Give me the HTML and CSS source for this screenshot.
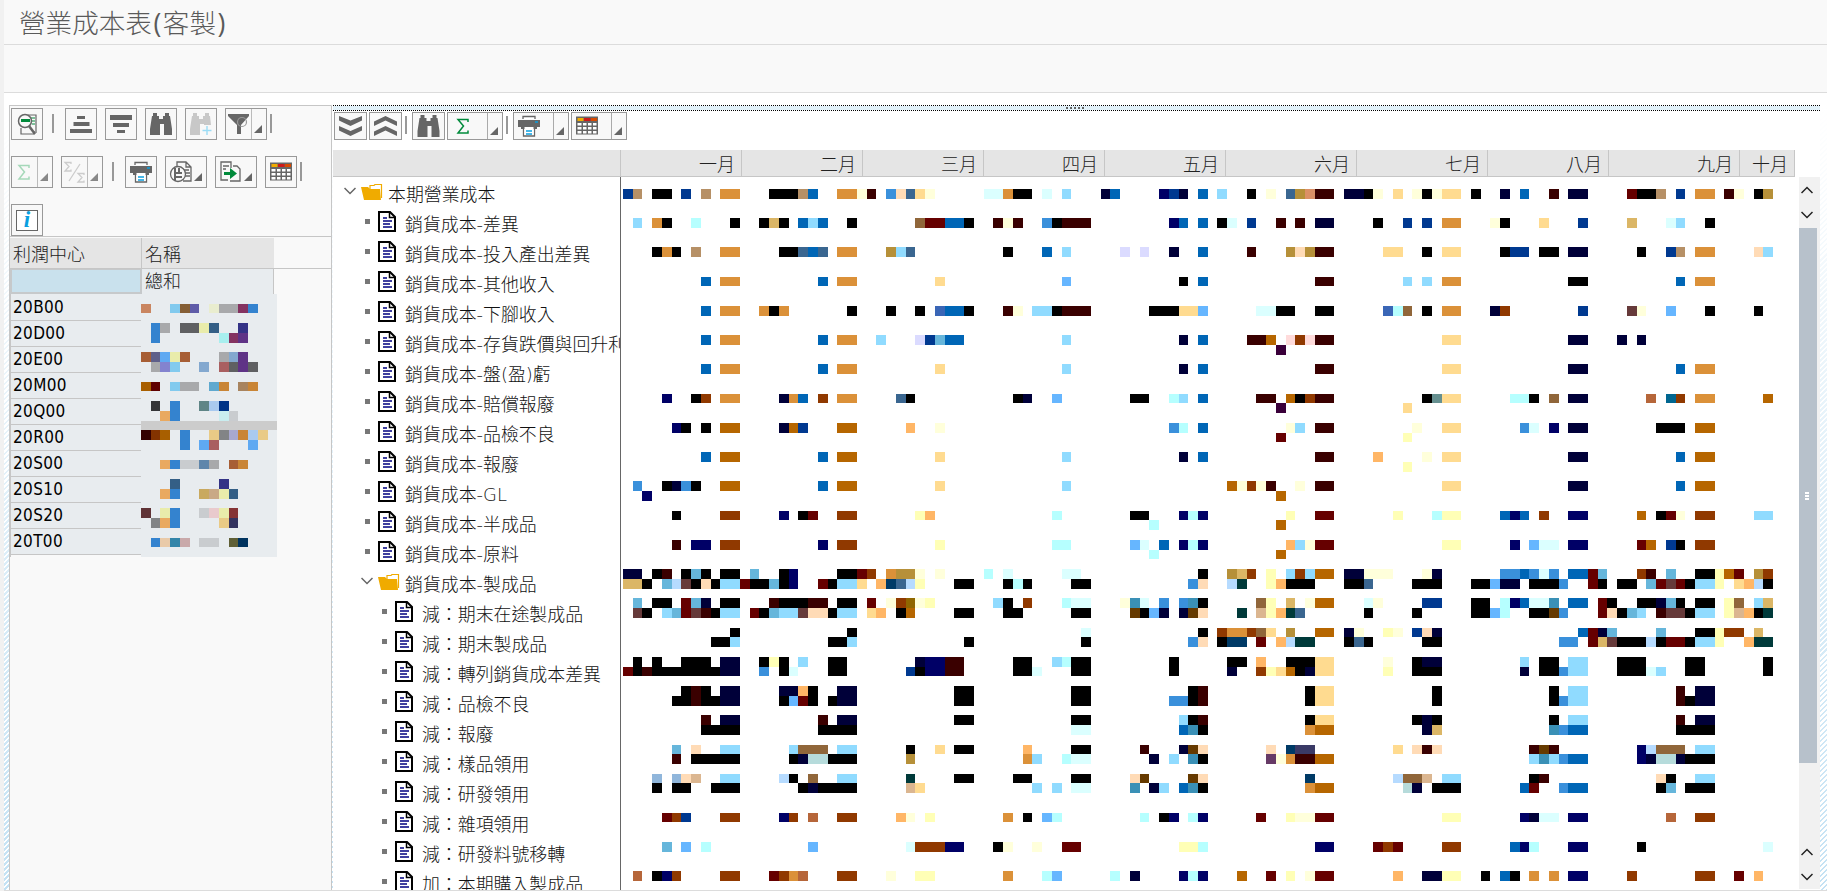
FILE: index.html
```html
<!DOCTYPE html>
<html lang="zh-Hant">
<head>
<meta charset="utf-8">
<title>營業成本表(客製)</title>
<link rel="stylesheet" href="styles.css">
</head>
<body>
<svg class="defs" width="0" height="0">
  <symbol id="detail" viewBox="0 0 32 32"><path d="M10 20v6h13v-3M17 7h8v18" fill="none" stroke="#666" stroke-width="1.2"/><path d="M20 10h4M21 13h3M21 16h3" stroke="#008a3b"/><circle cx="14" cy="13" r="6.500" fill="#f8f8f8" stroke="#666" stroke-width="1.5"/><path d="M10 12.500h9" stroke="#008a3b" stroke-width="3"/><path d="M18 18l6 8" stroke="#666" stroke-width="2.5"/></symbol>
  <symbol id="asc" viewBox="0 0 32 32"><path d="M12 8h8v3h-8zM8.500 14h16v4h-16zM5 21h22v4H5z" fill="#666"/></symbol>
  <symbol id="desc" viewBox="0 0 32 32"><path d="M5 7h22v5H5zM8 15h16v4H8zM12 22h8v3h-8z" fill="#666"/></symbol>
  <symbol id="find" viewBox="0 0 32 32"><path d="M8 5h4v3h2v3h4V8h2V5h4v3h1l2 13v6h-8V16h-4v11H5v-6L7 8h1z" fill="currentColor"/></symbol>
  <symbol id="findnext" viewBox="0 0 32 32"><path d="M8 5h4v3h2v3h4V8h2V5h4v3h1l1 9h-7v-1h-4v11H5v-6L7 8h1z" fill="#c8c8c8"/><path d="M22 18v9M17.500 22.500h9" stroke="#9bdcf5" stroke-width="1.400"/></symbol>
  <symbol id="filter" viewBox="0 0 26 32"><path d="M3 6h21v2l-8 9v9h-4v-9L3 8z" fill="#666"/><circle cx="17" cy="14" r="4.500" fill="none" stroke="#999" stroke-width="1.200"/></symbol>
  <symbol id="sum" viewBox="0 0 26 32"><path d="M18 12V9.500H8l5.500 6.500L8 23h10v-2.500" fill="none" stroke="currentColor" stroke-width="1.500"/></symbol>
  <symbol id="subsum" viewBox="0 0 26 32"><path d="M10 8V6.500H4l4 4-4 4.500h6v-1.500M23 19v-1.500h-6l4 4-4 4.500h6v-1.500M19 8L8 25" fill="none" stroke="#ccc" stroke-width="1.300"/></symbol>
  <symbol id="print" viewBox="0 0 32 32"><path d="M10 9V6.500h12V9M10.500 18v8h11v-8" fill="#fff" stroke="#666" stroke-width="1.300"/><path d="M5 10h22v7h-3v2H8v-2H5z" fill="#666"/><path d="M11.500 17h9v8h-9z" fill="#fff"/><path d="M13 21h6M13 24h6M22 12h3" stroke="#0a9fe0" stroke-width="1.300"/></symbol>
  <symbol id="views" viewBox="0 0 32 32"><path d="M12 10V6h9l5 5v14h-8M21 6v5h5M17 14h7M19 17h6M19 20h6" fill="none" stroke="#666" stroke-width="1.300"/><circle cx="13" cy="18" r="7.500" fill="#f8f8f8" stroke="#666" stroke-width="1.300"/><path d="M10 12v13M14 12v5M10 17h7M11 21h6" stroke="#666" stroke-width="2"/></symbol>
  <symbol id="export" viewBox="0 0 32 32"><path d="M13 24H6V6h10v6M8 10h6M8 13h3M15 25h10V13l-3-3h-4" fill="none" stroke="#666" stroke-width="1.300"/><path d="M9 16h6v-4l7 5.500-7 5.500v-4H9z" fill="#008a3b"/></symbol>
  <symbol id="layout" viewBox="0 0 32 32"><path d="M5 6.500h22v18H5z" fill="#666"/><path d="M6.500 8h6v3h-6z" fill="#f0ab00"/><path d="M13 8h6.500v3H13z" fill="#cc1919"/><path d="M20 8h6v3h-6z" fill="#d84a00"/><path d="M6.500 13h4v2.500h-4zM12 13h3.500v2.500H12zM17 13h3.500v2.500H17zM22 13h3.500v2.500H22zM6.500 17h4v2.500h-4zM12 17h3.500v2.500H12zM17 17h3.500v2.500H17zM22 17h3.500v2.500H22zM6.500 21h4v2.500h-4zM12 21h3.500v2.500H12zM17 21h3.500v2.500H17zM22 21h3.500v2.500H22z" fill="#fff"/></symbol>
  <symbol id="downs" viewBox="0 0 33 28"><path d="M5 4l11.500 4.500L28 4v4.500L16.500 14 5 8.500zM5 14l11.500 5L28 14v4.500L16.500 24 5 18.500z" fill="#666"/></symbol>
  <symbol id="ups" viewBox="0 0 33 28"><path d="M5 14l11.500-5.500L28 14V9.500L16.500 4 5 9.500zM5 24l11.500-5.500L28 24v-4.500L16.500 14 5 19.500z" fill="#666"/></symbol>
  <symbol id="corner" viewBox="0 0 8 8"><path d="M8 0v8H0z" fill="currentColor"/></symbol>
  <symbol id="folder" viewBox="0 0 22 17"><path d="M9 5V1.500h4l1-1h6.500V14" fill="none" stroke="#f0ab00" stroke-width="1.200"/><path d="M0 3h7l2 2h10l1 11H3z" fill="#f0ab00"/></symbol>
  <symbol id="doc" viewBox="0 0 18 21"><path d="M1 1h11l5 5v14H1z" fill="#fff" stroke="#000" stroke-width="2"/><path d="M11.500 1v5.500H17" fill="none" stroke="#000" stroke-width="1.500"/><path d="M5 7h4M5 10h9M5 13h7M5 16h9" stroke="#000080" stroke-width="1.600"/></symbol>
  <symbol id="chev" viewBox="0 0 12 8"><path d="M.500 1L6 6.500 11.500 1" fill="none" stroke="currentColor" stroke-width="1.500"/></symbol>
</svg>
<div class="edge"></div>
<div class="app">
  <header class="title">營業成本表<span class="paren">(</span>客製<span class="paren">)</span></header>
  <div class="bar"></div>
  <main class="work">
    <section class="left">
      <div class="tools">
        <div class="line">
          <span class="btn"><svg><use href="#detail"/></svg></span><i class="sep s1"></i>
          <span class="btn"><svg><use href="#asc"/></svg></span>
          <span class="btn"><svg><use href="#desc"/></svg></span>
          <span class="btn"><svg><use href="#find"/></svg></span>
          <span class="btn"><svg><use href="#findnext"/></svg></span>
          <span class="btn wide split"><svg><use href="#filter"/></svg><svg class="corner"><use href="#corner"/></svg></span><i class="sep s2"></i>
        </div>
        <div class="line">
          <span class="btn wide split off"><svg class="palegreen"><use href="#sum"/></svg><svg class="corner"><use href="#corner"/></svg></span>
          <span class="btn wide split off"><svg><use href="#subsum"/></svg><svg class="corner"><use href="#corner"/></svg></span><i class="sep s3"></i>
          <span class="btn"><svg><use href="#print"/></svg></span>
          <span class="btn wide"><svg><use href="#views"/></svg><svg class="corner"><use href="#corner"/></svg></span>
          <span class="btn wide"><svg><use href="#export"/></svg><svg class="corner"><use href="#corner"/></svg></span>
          <span class="btn"><svg><use href="#layout"/></svg></span><i class="sep s2"></i>
        </div>
        <div class="line"><span class="btn"><b class="info">i</b></span></div>
      </div>
      <div class="lhead"><span>利潤中心</span><span>名稱</span></div>
      <div class="total"><span></span><span>總和</span></div>
      <div class="lbody">
        <div class="codes"><span>20B00</span><span>20D00</span><span>20E00</span><span>20M00</span><span>20Q00</span><span>20R00</span><span>20S00</span><span>20S10</span><span>20S20</span><span>20T00</span></div>
        <svg class="names" id="names" viewBox="141 294 136 263"></svg>
      </div>
    </section>
    <section class="right">
      <div class="splitter"><i></i><i></i><i></i><i></i><i></i></div>
      <div class="rtools">
        <span class="btn"><svg><use href="#downs"/></svg></span>
        <span class="btn"><svg><use href="#ups"/></svg></span><i class="sep"></i>
        <span class="btn"><svg><use href="#find"/></svg></span>
        <span class="btn drop"><svg class="green"><use href="#sum"/></svg><svg class="corner"><use href="#corner"/></svg></span><i class="sep far"></i>
        <span class="btn drop"><svg><use href="#print"/></svg><svg class="corner"><use href="#corner"/></svg></span>
        <span class="btn drop"><svg><use href="#layout"/></svg><svg class="corner"><use href="#corner"/></svg></span>
      </div>
      <div class="months"><span></span><span>一月</span><span>二月</span><span>三月</span><span>四月</span><span>五月</span><span>六月</span><span>七月</span><span>八月</span><span>九月</span><span>十月</span></div>
      <div class="rbody">
        <div class="tree" id="tree"></div>
        <svg class="values" id="values" viewBox="621 177 1178 713"></svg>
        <div class="scroll">
          <svg class="arr up"><use href="#chev"/></svg>
          <svg class="arr"><use href="#chev"/></svg>
          <div class="thumb"><i></i><i></i><i></i></div>
          <svg class="arr up low"><use href="#chev"/></svg>
          <svg class="arr"><use href="#chev"/></svg>
        </div>
      </div>
    </section>
    <div class="hatch"></div>
  </main>
</div>
<script src="grid.js"></script>
</body>
</html>
```
FILE: styles.css
```css
* { box-sizing: border-box; }
body { margin: 0; width: 1827px; height: 891px; display: flex; overflow: hidden; background: #fff; color: #333; font-family: "DejaVu Sans", "Noto Sans CJK TC", sans-serif; }
.defs { position: absolute; }
.edge { width: 4px; background: #f1f1f1; }
.app { flex: 1; display: flex; flex-direction: column; border-bottom: 1px solid #dcdcdc; }
.title { height: 45px; padding-left: 15px; background: #f9f9f9; border-bottom: 1px solid #dcdcdc; font-family: "Open Sans", "Noto Sans CJK TC", sans-serif; font-weight: 300; font-size: 26.6px; line-height: 46px; color: #5a5a5a; }
.paren { font-weight: 400; padding: 0 1.5px; }
.bar { height: 48px; background: #f9f9f9; border-bottom: 1px solid #dcdcdc; }
.work { flex: 1; min-height: 0; display: flex; padding: 12px 0 0 5px; background: linear-gradient(#fff 12px, rgba(255,255,255,0)), repeating-linear-gradient(135deg, #c4e2f4 0 1.77px, #fff 1.77px 3.54px); }

.left { width: 323px; margin-right: 1px; border: 1px solid #c6c6c6; border-bottom: 0; background: #f9f9f9; }
.tools { height: 131px; padding: 2px 1px 0; border-bottom: 1px solid #c6c6c6; display: flex; flex-direction: column; gap: 16px; }
.line { display: flex; gap: 8px; height: 32px; }
.btn { position: relative; display: flex; width: 32px; height: 32px; border: 1px solid #999; background: #f8f8f8; color: #666; flex: none; }
.btn svg { width: 32px; height: 32px; margin: -1px; flex: none; }
.btn.wide { width: 42px; }
.split svg:first-child { width: 26px; margin-right: 0; }
.split::after { content: ""; position: absolute; left: 25px; top: 0; width: 1px; height: 30px; background: #bbb; }
.btn svg.corner { position: absolute; right: 4px; bottom: 6px; width: 8px; height: 8px; margin: 0; }
.off .corner { color: #888; }
.palegreen { color: #a5d8b9; }
.green { color: #008a3b; }
.info { margin: 5px 4px; width: 22px; height: 21px; border: 1px solid #666; font: italic bold 23px/18px "Liberation Serif", serif; text-align: center; color: #0a9fe0; background: #fff; }
.sep { width: 2px; height: 19px; margin-top: 6px; background: #999; flex: none; }
.s1 { margin-left: 1px; margin-right: 3px; }
.s2 { margin-left: -5px; }
.s3 { margin-left: 1px; margin-right: 3px; }

.lhead { display: flex; height: 32px; padding-top: 1px; border-bottom: 1px solid #c6c6c6; font-weight: 300; font-size: 18px; line-height: 34px; color: #222; }
.lhead span { width: 132px; height: 30px; background: #e5e5e5; padding-left: 3px; border-right: 1px solid #c6c6c6; }
.lhead span + span { width: 132px; border: 0; }
.total { display: flex; height: 25px; font-weight: 300; font-size: 18px; line-height: 26px; color: #222; }
.total span { width: 132px; background: #c9e1ed; border: 2px solid #c6c9cb; border-top-width: 1px; }
.total span + span { width: 132px; padding-left: 3px; background: #e8ecef; border: 0; border-right: 1px solid #c6c6c6; }
.lbody { display: flex; }
.codes { width: 131px; border-left: 1px solid #c6c6c6; color: #000; font-family: "DejaVu Sans Condensed", "DejaVu Sans", sans-serif; font-stretch: condensed; font-size: 17px; letter-spacing: .35px; }
.codes span { display: block; height: 26px; padding-left: 2px; line-height: 25px; background: #e8ecef; border-bottom: 1px solid #c6c6c6; }
.codes span:first-child { height: 27px; line-height: 27px; }
.names { width: 136px; height: 263px; background: #e8ecef; }

.right { width: 1487px; display: flex; flex-direction: column; background: #fff; }
.splitter { height: 6px; display: flex; gap: 2px; justify-content: center; padding: 2px 4px 0 0; flex: none; background: repeating-linear-gradient(90deg, #000 0 1px, #fff 1px 2px) 0 0 / 100% 1px no-repeat, repeating-linear-gradient(90deg, #000 0 1px, #fff 1px 2px) 0 100% / 100% 1px no-repeat, #e2f1f9; }
.splitter i { width: 2px; height: 2px; background: #666; }
.rtools { display: flex; gap: 2px; padding: 1px 0 0 1px; height: 39px; }
.rtools .btn { width: 33px; height: 28px; }
.rtools .btn svg { width: 33px; height: 32px; margin: -3px -1px; }
.rtools .btn.drop { width: 56px; }
.rtools .drop svg:first-child { width: 32px; }
.drop::after { content: ""; position: absolute; left: 39px; top: 0; width: 1px; height: 26px; background: #aaa; }
.rtools .btn svg.corner { width: 8px; height: 8px; bottom: 4px; margin: 0; }
.rtools .sep { margin: 4px 3px 0 1px; height: 18px; }
.months { display: flex; height: 27px; width: 1462px; background: #e5e5e5; border-bottom: 1px solid #c6c6c6; font-weight: 300; font-size: 18px; line-height: 29px; color: #222; }
.months span { width: 121px; height: 26px; border-right: 1px solid #c6c6c6; text-align: right; padding-right: 6px; }
.months span:nth-child(1) { width: 288px; }
.months span:nth-child(7), .months span:nth-child(8), .months span:nth-child(10) { width: 131px; }
.months span:nth-child(11) { width: 55px; }
.rbody { display: flex; flex: 1; min-height: 0; overflow: hidden; }
.tree { width: 288px; padding-top: 2px; border-right: 1px solid #666; overflow: hidden; }
.node { display: flex; align-items: center; height: 30px; padding-left: 11px; white-space: nowrap; font-weight: 300; font-size: 17.9px; line-height: 31px; color: #111; }
.l1 { padding-left: 28px; }
.l2 { padding-left: 45px; }
.node .chev { width: 12px; height: 8px; margin-right: 5px; color: #666; flex: none; margin-top: -6px; }
.node .folder { width: 22px; height: 17px; margin: -3px 5px 0 0; flex: none; }
.node .dot { width: 5px; height: 5px; margin: -5px 8px 0 4px; background: #777; flex: none; }
.node .doc { width: 18px; height: 21px; margin: -5px 9px 0 0; flex: none; }
.values { width: 1178px; height: 713px; flex: none; }
.scroll { width: 21px; height: 712px; background: #f1f1f1; display: flex; flex-direction: column; flex: none; }
.arr { width: 12px; height: 8px; color: #222; flex: none; }
.arr.up { transform: rotate(180deg); }
.scroll .arr { margin-left: 2px; }
.scroll .arr:nth-child(1) { margin-top: 9px; }
.scroll .arr:nth-child(2) { margin-top: 17px; }
.scroll .arr:nth-child(4) { margin-top: 85px; }
.scroll .arr:nth-child(5) { margin-top: 17px; }
.thumb { width: 18px; height: 535px; margin-top: 9px; padding: 264px 2px 0 0; background: #b7c1cb; display: flex; flex-direction: column; gap: 1px; align-items: center; flex: none; }
.thumb i { width: 4px; height: 2px; background: #fff; }
```
FILE: grid.js
```javascript
var PITCH = 9.7457;

// Draws one mosaic: each row is a list of "column[-lastColumn]colourKey" tokens.
function mosaic(id, x0, y0, palette, rows) {
  var out = '';
  Object.keys(rows).forEach(function (r) {
    var top = Math.round(y0 + PITCH * r), bottom = Math.round(y0 + PITCH * (+r + 1));
    rows[r].split(' ').forEach(function (t) {
      var m = /^(\d+)(?:-(\d+))?(\w)$/.exec(t);
      var a = Math.round(x0 + PITCH * m[1]), b = Math.round(x0 + PITCH * (+(m[2] || m[1]) + 1));
      out += '<rect x="' + a + '" y="' + top + '" width="' + (b - a) + '" height="' + (bottom - top) + '" fill="' + palette[m[3]] + '"/>';
    });
  });
  document.getElementById(id).innerHTML = out;
}

mosaic('names', 141, 303.65, {
  a: '#a8a9ab', b: '#3483cf', c: '#82caee', d: '#5f6062', e: '#e9ecab', f: '#345f86', g: '#343386', h: '#a8efef', i: '#843361', j: '#5f3386',
  k: '#a75e35', l: '#5e5f8a', m: '#5fa9f2', n: '#8383cf', o: '#83a8cf', p: '#a95f60', q: '#a85f00', r: '#5f0000', s: '#5fa9cf', t: '#c98536',
  u: '#a8845f', v: '#343537', w: '#5f8586', x: '#a9caef', y: '#003386', z: '#e9a960', A: '#c9edef', B: '#c9cccf', C: '#cccccc', D: '#340000',
  E: '#833300', F: '#e9ca86', G: '#828486', H: '#a8a8cf', I: '#c9a95f', J: '#c9a986', K: '#5f3336', L: '#e9cacd', M: '#853335', N: '#34335f',
  O: '#e9caa9', P: '#3485a9', Q: '#c9a9aa', R: '#5f5f36', S: '#00335f', T: '#c98560', U: '#855f36', V: '#5f5ca8', W: '#e9edcf', X: '#5f86ab'
}, {
  0: '0T 3c 4U 5V 7W 8-9a 10i 11b',
  2: '1b 2a 4-5d 6e 7f 10g',
  3: '1b 8h 9i 10j',
  5: '0k 1l 2m 3e 4k 8a 9o 10j',
  6: '1a 2n 3c 6o 8p 9d 10j 11d',
  8: '0q 1r 3c 4-5a 7s 8t 10u 11t',
  10: '1v 3b 6w 7x 8y',
  11: '2z 3b 8A 9B',
  12: '0-13C',
  13: '0D 1E 2q 4b 7F 8G 9H 10t 11x 12F',
  14: '4b 6m 7p 11m',
  16: '2z 3b 4-5B 6X 7a 9k 10t',
  18: '3f 8g',
  19: '2z 3b 6I 7J 8e 9f',
  21: '0K 2e 3b 6B 7L 8e 9M',
  22: '1G 2z 3b 8F 9N',
  24: '1b 2O 3P 4Q 6-7B 9R 10S'
});

mosaic('values', 623, 189, {
  k: '#000000', n: '#000039', v: '#000066', b: '#0066b6', d: '#003990', s: '#3a90db', l: '#90dbff', t: '#66b6db', m: '#66b6ff', c: '#b6ffff',
  e: '#dbffff', o: '#db9139', f: '#ffdb90', y: '#ffffdb', w: '#ffffb6', p: '#ffdbb6', P: '#ffb666', g: '#dbb666', G: '#b69039', B: '#b66600',
  r: '#660000', R: '#3a0000', h: '#903900', H: '#b6663a', T: '#b69066', W: '#90663a', S: '#3a6690', i: '#663a3a', a: '#b6dbff', A: '#90b6db',
  D: '#dbb690', L: '#dbdbff', q: '#3a90b6', u: '#663a00', U: '#003a3a', N: '#003a66', K: '#906600', Q: '#b6dbdb', E: '#3a66b6', M: '#3a003a',
  O: '#db9066', X: '#ffdbdb', F: '#006690', J: '#669090', Y: '#3a3a66', V: '#663a66'
}, {
  0: '0d 1T 3-4k 6d 8T 10-11o 15-17k 18T 19b 22-23o 24y 25R 27s 28p 29S 30f 31y 37-38e 39o 40-41k 43e 45l 49n 50b 55v 56d 57n 59b 61l 64k 66y 68S 69G 70O 71-72R 74-75n 76k 77y 79f 81y 82k 83y 84-85f 87k 90n 92b 95R 97-98n 103r 104-105k 106T 108d 110-111o 113R 114y 116k 117G',
  3: '1l 3o 4k 7c 11k 14k 15g 16k 18b 19l 20b 23k 30W 31-32r 33-34b 35k 38R 39y 40R 43s 44k 45-47R 56v 57b 59b 61k 62e 64d 67R 69R 71-72n 77k 80d 82d 84-85o 89y 90k 94f 98d 103g 107e 108l 111k',
  6: '3k 4o 5k 7T 10-11o 16-17k 18S 19b 20S 22-23o 27G 28l 29S 39k 43b 45l 51L 53L 56n 59b 64R 68G 69p 70G 71-72R 78-79f 82k 84-85f 90k 91-92d 94-95k 97-98n 104k 107d 108T 110-111o 116p 117l',
  9: '8b 10-11o 20b 22-23o 32f 45m 57k 59b 71-72R 80l 82l 84-85o 97-98k 108b 110-111o',
  12: '8b 10-11o 14o 15k 16o 23k 27k 30k 32E 33-34b 35k 39R 40y 42-43l 44k 45-47R 54-56k 57-58f 59m 65-66e 67-68k 71-72k 78E 79c 80W 82k 84-85o 89n 90h 98d 103i 104y 107m 111k 116k',
  15: '8b 10-11o 20b 22-23o 26l 30L 31d 32t 33-34b 45l 57n 59b 64-65R 66B 68X 69h 70X 71-72R 84-85f 97-98n 102n 104n',
  16: '67M',
  18: '8b 10-11o 20b 22-23o 32f 45l 57n 59b 71-72R 84-85f 97-98n 108b 110-111o',
  21: '4v 7k 8h 10-11o 16n 17o 18b 20h 22-23o 28S 29k 40k 41n 44m 52-53k 56c 57l 59b 65-66R 68B 69k 70h 71-72R 82k 83J 84-85f 91-92c 93k 95W 97-98n 105H 107F 108h 110-111o 117B',
  22: '67M 80f',
  24: '5v 6k 8k 10-11B 16n 17B 18d 22-23B 29P 32y 56s 57c 59b 68y 69l 71-72R 81y 84-85f 92s 93e 95v 97-98n 106-108k 110-111B',
  25: '67r 80w',
  27: '8b 10-11B 20b 22-23B 32f 45l 57n 59b 71-72R 77P 82y 84-85f 97-98n 108b 110-111B',
  28: '80w',
  30: '1s 4k 5n 6s 7k 10-11B 20b 22-23B 32f 45l 62B 63y 64h 65y 66R 69y 71-72R 84-85f 97-98n 108b 110-111B',
  31: '2v 67B',
  33: '5k 10-11h 16v 18k 19r 22-23h 30w 31P 44c 52-53k 57v 58c 59v 68w 71-72r 79w 83c 84-85w 90b 91v 92b 94h 97-98v 104B 106k 107r 108y 110-111h 116-117l',
  34: '54c 67B',
  36: '5R 7-8v 10-11h 20v 22-23h 32w 44-45c 52m 53e 55b 57v 58c 59v 68P 69l 70y 71-72r 84-85w 91v 93m 94-95e 97-98v 104r 105B 107d 108k 110-111h',
  37: '54c 67B',
  39: '0-1n 3k 4R 6k 7t 8k 10-11k 13t 16k 17v 22-23k 24r 25h 27o 28-29G 30y 32y 37c 39e 45-46e 59k 62G 63g 64h 66w 68l 69h 70l 71-72B 74-75n 76-78y 82y 83n 90-91s 92b 93s 94e 95s 97-98b 99r 100t 104h 105R 107t 110-111k 112w 113B 114r 116G 117h',
  40: '0-1g 2k 4t 5a 6i 7k 8p 9k 10-11l 12r 13-14k 15t 16k 17v 20r 21k 22-23l 24f 26P 27N 28S 29a 30w 34-35k 39k 40c 41k 46-47k 58s 59p 62a 63U 66w 67P 68-70k 74-75k 76S 81-83k 87-88k 89m 90-91n 93-95k 96s 99r 100k 102-103k 105t 106r 107i 108r 109k 110-111l 112w 114f 115P 116a 117k',
  42: '1t 3-4k 6r 7t 8n 10-11k 15R 16-18k 19-20R 22-23k 25r 27y 28h 29K 30y 31w 38l 39k 41h 45c 46-47e 51y 52q 53e 55s 57s 58q 59k 65W 66w 68g 70y 71-72B 76e 77y 82-83d 87-88k 90c 91v 92b 93-94e 95q 97-98b 100r 101k 104-105k 106n 107t 108k 110-111k 113w 114W 116l 117g',
  43: '1i 2k 4l 5t 6r 7i 8R 9k 10-11l 13r 14k 15t 16-17l 18i 19-20p 21k 22-23l 25f 26P 28k 29B 34-35k 39-40k 46-47k 52u 53k 54m 55n 57n 58u 59p 63U 65D 66w 67P 68U 69S 76k 81k 87-88k 89m 90c 93-94k 95u 96s 100r 101p 102k 103t 104l 106R 107-108i 109k 110-111l 113w 114D 115P 116k 117U',
  45: '11k 23k 47e 59k 61h 62-63o 64h 65W 66f 68G 71-72B 74n 75y 78w 79y 81d 82p 83n 98b 99r 100n 101t 106t 110-111k 112w 113-114h 116g',
  46: '9-10k 11l 21-22k 23l 35k 47k 58s 59p 61k 62-63N 65r 67P 68a 69-70U 74k 75S 76k 82-83k 96-97s 99r 100g 101i 102-104k 105a 106k 107-108r 109k 110-111l 112w 115P 116-117U',
  48: '1k 3k 6-8k 10-11n 14k 15w 16k 18l 21-22k 30n 31-32v 33-34R 40-41k 44l 45c 46-47k 56k 62-63k 65P 68-70k 71-72f 78y 81k 82-83n 92l 94-95k 97-98l 102-104k 109-110k 117k',
  49: '0r 1k 2R 3-9k 10-11n 14s 16k 17e 21-22k 29d 30k 31-32v 33-34R 40-41k 42e 46-47k 56k 62n 65h 66w 67f 68B 69k 70n 71-72f 78w 81-83k 92n 94-95k 96s 97-98l 102-104k 105e 106l 109-110k 117k',
  51: '6k 7R 8k 10-11n 16-17n 18P 19k 22-23n 34-35k 46-47k 58k 59R 70k 71-72f 83k 95k 97-98l 108R 110-111n',
  52: '5-6k 7R 8-9k 10-11n 16k 17m 18r 19k 21k 22-23n 34-35k 46-47k 56-57s 58k 59R 70k 71-72f 83k 95k 96s 97-98l 108R 109k 110-111n',
  54: '8R 10-11n 20R 22-23n 34-35k 46-47k 57l 58k 59R 70k 71-72f 81k 82n 83k 95k 97-98l 108R 110-111n',
  55: '8-11k 20-23k 46-47e 57b 58q 59k 70o 71-72B 82n 83g 95q 96s 97-98b 108-111k',
  57: '5t 7p 10-11l 17l 18-20W 22-23l 29k 32f 34-35k 41P 46-47k 53R 57n 58u 59p 66p 68N 69-70Y 79f 81p 82R 83p 93R 94u 95R 104v 105a 106-108W 110-111l',
  58: '5R 7-11k 17k 18n 19-20Q 21-23k 29G 41o 42l 45c 46-47e 54n 56l 58q 59k 66V 67y 68o 69-70R 71-72B 93l 94q 95l 96s 97-98b 104v 105n 106-107Q 108n 109-111k',
  60: '3A 5A 6p 7D 10-11l 16a 17k 19W 22-23l 29U 34-35k 40-41k 46-47k 52p 53u 58u 59p 70N 79a 80-81W 82D 84-85l 93k 94R 106p 107k 110-111l',
  61: '3k 5-6k 9-11k 18k 19n 20-23k 29D 30f 42l 44l 46-47e 52q 54n 55l 57b 58q 59k 70o 71-72B 80Q 81n 83-85k 92b 93r 96s 97-98b 106k 107t 109-111k',
  64: '4r 5h 6d 10-11h 16v 17h 19H 22-23h 28P 29y 31w 39o 41k 43m 44c 53c 55k 56v 58c 59v 65r 68w 69-70y 71-72r 84-85w 92v 93n 94-95e 97-98v 107H 110-111h',
  67: '4t 6m 8c 19m 29e 30-32h 33-34v 38k 39y 42y 45-46r 57-58w 59c 71-72v 77r 78h 79r 84-85h 91b 92v 93c 97-98v 104k 117e',
  70: '1H 3k 4v 5h 10-11h 15r 16h 17o 18H 22-23h 27y 30-31w 39o 43c 44m 50c 52n 57v 58c 59v 63B 66r 68w 70y 71-72r 79P 82-83n 84-85w 88k 90b 91k 93o 95o 97-98v 103h 110-111h 114r 116P'
});

// Cost tree: [level, isFolder, label]
var nodes = [
  [0, 1, '本期營業成本'], [1, 0, '銷貨成本-差異'], [1, 0, '銷貨成本-投入產出差異'], [1, 0, '銷貨成本-其他收入'], [1, 0, '銷貨成本-下腳收入'],
  [1, 0, '銷貨成本-存貨跌價與回升利益'], [1, 0, '銷貨成本-盤(盈)虧'], [1, 0, '銷貨成本-賠償報廢'], [1, 0, '銷貨成本-品檢不良'], [1, 0, '銷貨成本-報廢'],
  [1, 0, '銷貨成本-GL'], [1, 0, '銷貨成本-半成品'], [1, 0, '銷貨成本-原料'], [1, 1, '銷貨成本-製成品'], [2, 0, '減：期末在途製成品'],
  [2, 0, '減：期末製成品'], [2, 0, '減：轉列銷貨成本差異'], [2, 0, '減：品檢不良'], [2, 0, '減：報廢'], [2, 0, '減：樣品領用'],
  [2, 0, '減：研發領用'], [2, 0, '減：雜項領用'], [2, 0, '減：研發料號移轉'], [2, 0, '加：本期購入製成品']
];
document.getElementById('tree').innerHTML = nodes.map(function (n) {
  var lead = n[1]
    ? '<svg class="chev"><use href="#chev"/></svg><svg class="folder"><use href="#folder"/></svg>'
    : '<i class="dot"></i><svg class="doc"><use href="#doc"/></svg>';
  return '<div class="node l' + n[0] + '">' + lead + '<span>' + n[2] + '</span></div>';
}).join('');
```
